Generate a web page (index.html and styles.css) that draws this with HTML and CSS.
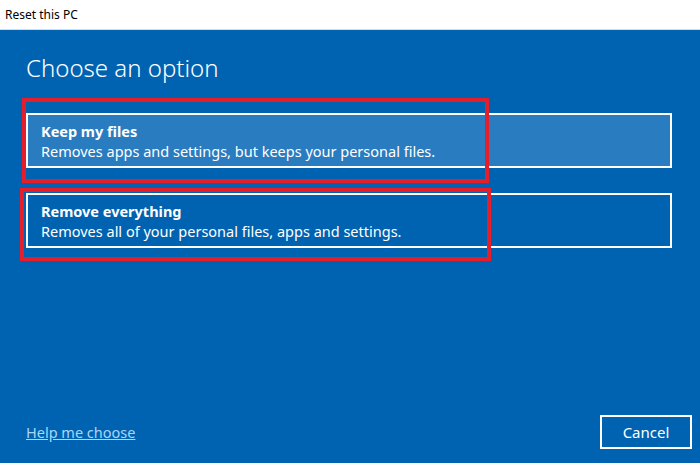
FILE: index.html
```html
<!DOCTYPE html>
<html lang="en">
<head>
  <meta charset="UTF-8">
  <meta name="viewport" content="width=device-width, initial-scale=1.0">
  <title>Reset this PC</title>
  <link rel="stylesheet" href="styles.css">
</head>
<body>
  <div class="window">
    <div class="titlebar">Reset this PC</div>
    <div class="content">
      <h1>Choose an option</h1>
      <div class="options">
        <div class="option active">
          <div class="option-title">Keep my files</div>
          <div class="option-desc">Removes apps and settings, but keeps your personal files.</div>
          <span class="mark mark-keep"></span>
        </div>
        <div class="option">
          <div class="option-title">Remove everything</div>
          <div class="option-desc">Removes all of your personal files, apps and settings.</div>
          <span class="mark mark-remove"></span>
        </div>
      </div>
      <div class="footer">
        <a href="#" class="help">Help me choose</a>
        <button class="cancel">Cancel</button>
      </div>
    </div>
  </div>
</body>
</html>
```

FILE: styles.css
```css
body {
  margin: 0;
  font-family: "Noto Sans", "Open Sans", sans-serif;
  background: #0063b1;
}
.window {
  display: flex;
  flex-direction: column;
  height: 463px;
}
.titlebar {
  height: 29px;
  padding-left: 5px;
  line-height: 29px;
  font-size: 12px;
  color: #000;
  background: #fff;
  border-bottom: 1px solid #d6dde6;
}
.content {
  flex: 1;
  display: flex;
  flex-direction: column;
  padding: 21px 28px 14px 26px;
  color: #fff;
}
h1 {
  margin: 0 0 28px;
  font-size: 24px;
  font-weight: 300;
  line-height: 34px;
}
.options {
  display: flex;
  flex-direction: column;
  gap: 25px;
}
.option {
  position: relative;
  height: 51px;
  padding: 0 13px;
  border: 2px solid #fff;
  display: flex;
  flex-direction: column;
  justify-content: center;
  font-size: 14.5px;
  line-height: 20px;
}
.option.active {
  background: #2a7cc0;
}
.option-title {
  font-weight: 700;
}
.mark {
  position: absolute;
  border: 4px solid #e41e2b;
  pointer-events: none;
}
.mark-keep {
  left: -6px;
  top: -17px;
  width: 459px;
  height: 77px;
}
.mark-remove {
  left: -8px;
  top: -7px;
  width: 463px;
  height: 65px;
}
.footer {
  margin-top: auto;
  display: flex;
  justify-content: space-between;
  align-items: center;
}
.help {
  color: #a9d6f7;
  font-size: 14.5px;
}
.cancel {
  width: 92px;
  height: 34px;
  margin-right: -20px;
  background: transparent;
  border: 2px solid #fff;
  color: #fff;
  font-family: inherit;
  font-size: 15px;
}
```
